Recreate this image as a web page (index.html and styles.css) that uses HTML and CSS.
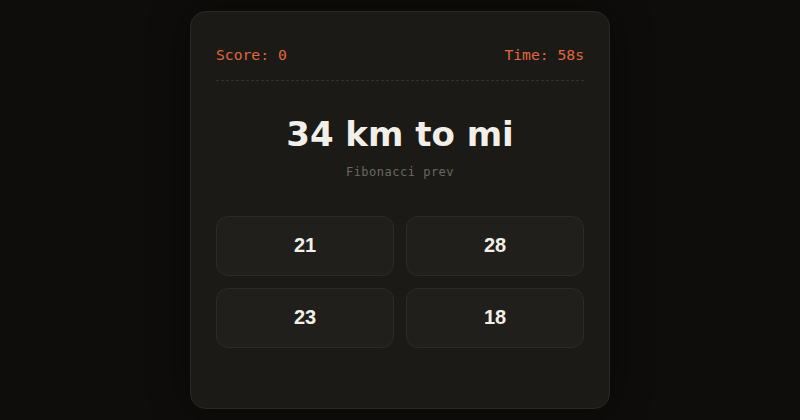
FILE: index.html
```html
<!DOCTYPE html>
<html lang="en">
<head>
<meta charset="utf-8">
<title>Quiz</title>
<link rel="stylesheet" href="styles.css">
</head>
<body>
<main class="card">
  <header class="stats">
    <span class="score">Score: 0</span>
    <span class="time">Time: 58s</span>
  </header>
  <h1 class="question">34 km to mi</h1>
  <p class="hint">Fibonacci prev</p>
  <div class="answers">
    <button class="answer">21</button>
    <button class="answer">28</button>
    <button class="answer">23</button>
    <button class="answer">18</button>
  </div>
</main>
</body>
</html>
```

FILE: styles.css
```css
* { box-sizing: border-box; }
html, body { margin: 0; padding: 0; }
body {
  background: #0e0d0b;
  height: 420px;
  display: flex;
  align-items: center;
  justify-content: center;
}
.card {
  width: 420px;
  background: #1b1a17;
  border: 1px solid #2a2825;
  border-radius: 16px;
  padding: 34px 25px 60px;
  box-shadow: 0 0 40px rgba(0,0,0,0.45);
}
.stats {
  display: flex;
  justify-content: space-between;
  font-family: "DejaVu Sans Mono", monospace;
  font-size: 14.7px;
  line-height: 18px;
  color: #e0683e;
  padding-bottom: 16px;
  border-bottom: 1px dashed #34322d;
}
.question {
  margin: 31px 0 0;
  text-align: center;
  font-family: "DejaVu Sans", sans-serif;
  font-weight: bold;
  font-size: 34px;
  line-height: 44px;
  color: #f2efe8;
}
.hint {
  margin: 8px 0 0;
  text-align: center;
  font-family: "DejaVu Sans Mono", monospace;
  font-size: 12px;
  line-height: 16px;
  letter-spacing: 0.5px;
  color: #6b6861;
}
.answers {
  margin-top: 36px;
  display: grid;
  grid-template-columns: 1fr 1fr;
  gap: 12px;
}
.answer {
  height: 60px;
  background: #211f1c;
  border: 1px solid #2d2b27;
  border-radius: 12px;
  font-family: "Liberation Sans", Arial, sans-serif;
  font-weight: bold;
  font-size: 20px;
  color: #f2efe8;
  padding: 0 0 2px;
}
```
